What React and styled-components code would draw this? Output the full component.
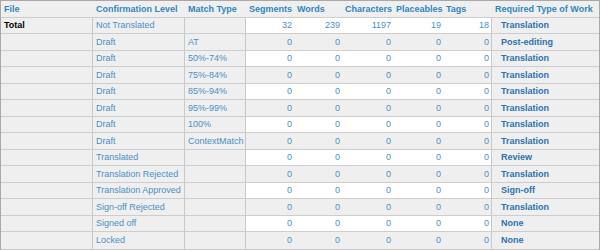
import React from "react";
import styled, { createGlobalStyle } from "styled-components";

const Global = createGlobalStyle`
  html, body { margin: 0; padding: 0; background: #ffffff; }
  body { font-family: "Liberation Sans", Arial, sans-serif; }
`;

const COLS = "92px 92px 61px 48px 48px 51px 50px 49px 1fr";

const Table = styled.div`
  width: 600px;
  box-sizing: border-box;
  border: 1px solid #a8a8a8;
  border-bottom-color: #c8c8c8;
  display: flex;
  flex-direction: column;
  font-size: 9px;
`;

const Row = styled.div`
  display: grid;
  grid-template-columns: ${COLS};
  height: 16.5px;
  box-sizing: border-box;
  border-bottom: 1px solid #cdcdcd;
  &:last-child { border-bottom: none; }
`;

const HeadCell = styled.div`
  display: flex;
  align-items: center;
  padding-left: 3px;
  background: #efefef;
  color: #2f86be;
  font-weight: bold;
  white-space: nowrap;
  overflow: hidden;
`;

const Cell = styled.div`
  display: flex;
  align-items: center;
  justify-content: ${(p) => (p.$num ? "flex-end" : "flex-start")};
  padding: ${(p) => (p.$num ? "0 2px 0 0" : p.$indent ? "0 0 0 9px" : "0 0 0 3px")};
  background: ${(p) => (p.$white ? "#ffffff" : "#efefef")};
  color: ${(p) => (p.$black ? "#000000" : p.$strong ? "#2c72ad" : "#4a8fc6")};
  font-weight: ${(p) => (p.$black || p.$strong ? "bold" : "normal")};
  border-right: ${(p) => (p.$sep ? "1px solid #c8c8c8" : "none")};
  white-space: nowrap;
  overflow: hidden;
`;

const headers = [
  "File",
  "Confirmation Level",
  "Match Type",
  "Segments",
  "Words",
  "Characters",
  "Placeables",
  "Tags",
  "Required Type of Work",
];

const rows = [
  { file: "Total", level: "Not Translated", match: "", nums: [32, 239, 1197, 19, 18], work: "Translation" },
  { level: "Draft", match: "AT", work: "Post-editing" },
  { level: "Draft", match: "50%-74%", work: "Translation" },
  { level: "Draft", match: "75%-84%", work: "Translation" },
  { level: "Draft", match: "85%-94%", work: "Translation" },
  { level: "Draft", match: "95%-99%", work: "Translation" },
  { level: "Draft", match: "100%", work: "Translation" },
  { level: "Draft", match: "ContextMatch", work: "Translation" },
  { level: "Translated", match: "", work: "Review" },
  { level: "Translation Rejected", match: "", work: "Translation" },
  { level: "Translation Approved", match: "", work: "Sign-off" },
  { level: "Sign-off Rejected", match: "", work: "Translation" },
  { level: "Signed off", match: "", work: "None" },
  { level: "Locked", match: "", work: "None" },
];

export default function App() {
  return (
    <>
      <Global />
      <Table>
        <Row>
          {headers.map((h) => (
            <HeadCell key={h}>{h}</HeadCell>
          ))}
        </Row>
        {rows.map((r, i) => {
          const white = i % 2 === 0;
          const nums = r.nums || [0, 0, 0, 0, 0];
          return (
            <Row key={i}>
              <Cell $sep $black>{r.file || ""}</Cell>
              <Cell $sep>{r.level}</Cell>
              <Cell $sep>{r.match}</Cell>
              {nums.map((n, j) => (
                <Cell key={j} $num $white={white} $sep={j === 4}>
                  {n}
                </Cell>
              ))}
              <Cell $strong $indent>{r.work}</Cell>
            </Row>
          );
        })}
      </Table>
    </>
  );
}
